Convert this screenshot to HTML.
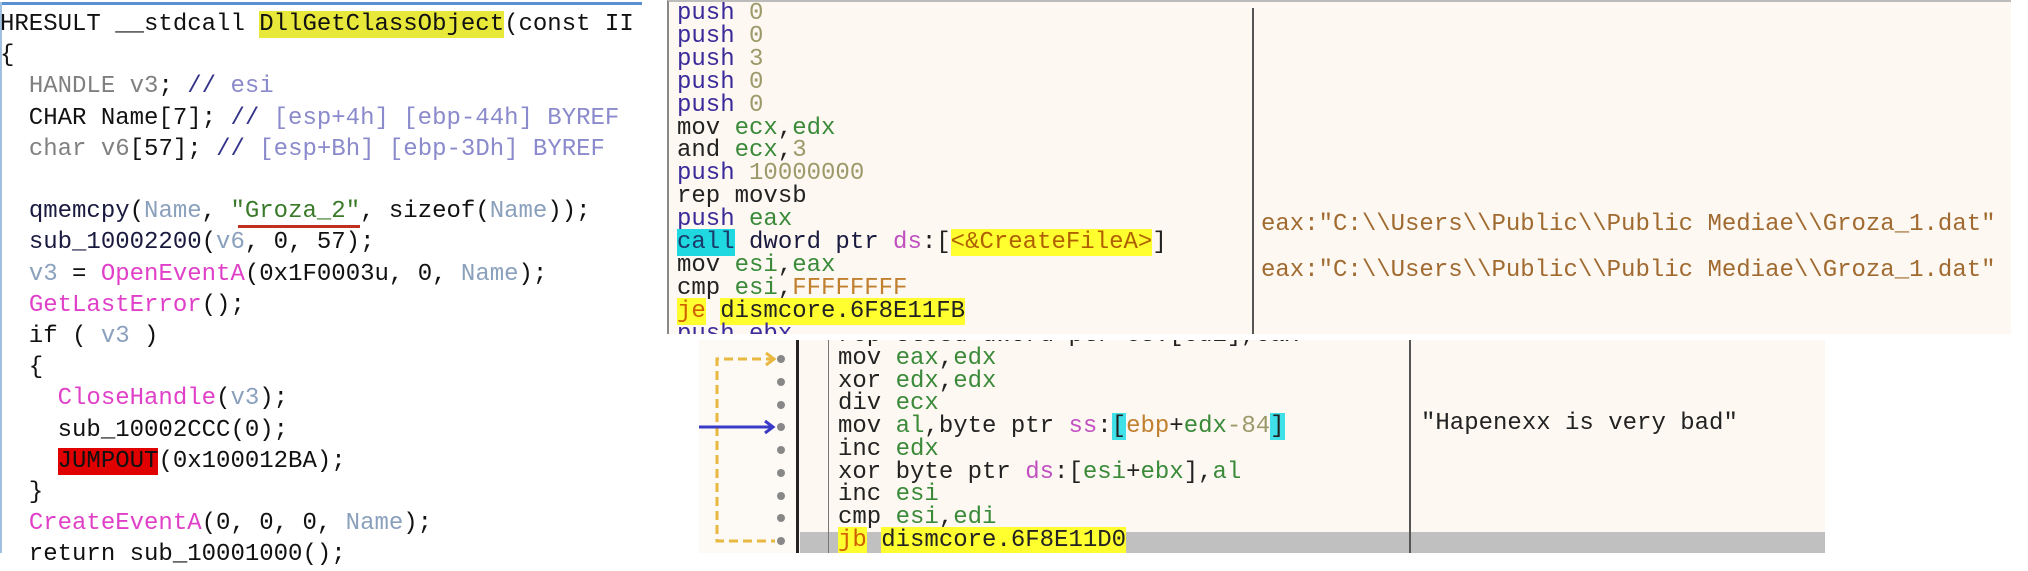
<!DOCTYPE html>
<html><head><meta charset="utf-8"><style>
body{margin:0;width:2028px;height:553px;overflow:hidden;background:#fff;position:relative;font-family:"Liberation Mono",monospace;font-size:24px;}
pre{margin:0;font-family:inherit;font-size:inherit;position:absolute;white-space:pre;}
.g{color:#808080}.c{color:#8a8acc}.cs{color:#33338a}.n{color:#8aa0bc}.f{color:#e040c8}.s{color:#3a7a2a}.k{color:#1a1a40}
.pu{color:#3a2a9a}.nm{color:#9a9a6a}.r{color:#3a8a3a}.o{color:#c08030}.m{color:#c050c0}
</style></head><body>
<div style="position:absolute;left:0;top:2px;width:642px;height:3px;background:#5a8fd0"></div>
<div style="position:absolute;left:0;top:2px;width:2px;height:551px;background:#a0c0e0"></div>
<pre style="left:0;top:9px;line-height:31.2px;color:#111">HRESULT __stdcall <span style="background:#e8e83a">DllGetClassObject</span>(const II
{
  <span class="g">HANDLE v3</span>; <span class="cs">//</span> <span class="c">esi</span>
  CHAR Name[7]; <span class="cs">//</span> <span class="c">[esp+4h] [ebp-44h] BYREF</span>
  <span class="g">char v6</span>[57]; <span class="cs">//</span> <span class="c">[esp+Bh] [ebp-3Dh] BYREF</span>

  <span class="k">qmemcpy</span>(<span class="n">Name</span>, <span class="s">"Groza_2"</span>, sizeof(<span class="n">Name</span>));
  <span class="k">sub_10002200</span>(<span class="n">v6</span>, 0, 57);
  <span class="n">v3</span> = <span class="f">OpenEventA</span>(0x1F0003u, 0, <span class="n">Name</span>);
  <span class="f">GetLastError</span>();
  if ( <span class="n">v3</span> )
  {
    <span class="f">CloseHandle</span>(<span class="n">v3</span>);
    sub_10002CCC(0);
    <span style="background:#e00000">JUMPOUT</span>(0x100012BA);
  }
  <span class="f">CreateEventA</span>(0, 0, 0, <span class="n">Name</span>);
  return sub_10001000();</pre>
<div style="position:absolute;left:238px;top:225px;width:122px;height:3px;background:#c03020"></div>

<div style="position:absolute;left:667px;top:0;width:1342px;height:332px;background:#fdf8f1;border-top:2px solid #bbb;border-left:2px solid #888;overflow:hidden">
<div style="position:absolute;left:583px;top:6px;width:2px;height:330px;background:#555"></div>
<pre style="left:8px;top:1px;line-height:22.9px;color:#222"><span class="pu">push</span> <span class="nm">0</span>
<span class="pu">push</span> <span class="nm">0</span>
<span class="pu">push</span> <span class="nm">3</span>
<span class="pu">push</span> <span class="nm">0</span>
<span class="pu">push</span> <span class="nm">0</span>
mov <span class="r">ecx</span>,<span class="r">edx</span>
and <span class="r">ecx</span>,<span class="nm">3</span>
<span class="pu">push</span> <span class="nm">10000000</span>
rep movsb
<span class="pu">push</span> <span class="r">eax</span>
<span style="background:#20d8e0;color:#1a3a6a">call</span> <span class="k">dword ptr</span> <span class="m">ds</span>:[<span style="background:#ffff30;color:#b06000">&lt;&amp;CreateFileA&gt;</span>]
mov <span class="r">esi</span>,<span class="r">eax</span>
cmp <span class="r">esi</span>,<span class="o">FFFFFFFF</span>
<span style="background:#ffff30;color:#d06000">je</span> <span style="background:#ffff30;color:#222">dismcore.6F8E11FB</span>
<span class="pu">push ebx</span></pre>
<pre style="left:592px;top:200px;line-height:45.8px;color:#a06a30">eax:"C:\\Users\\Public\\Public Mediae\\Groza_1.dat"
eax:"C:\\Users\\Public\\Public Mediae\\Groza_1.dat"</pre>
</div>

<div style="position:absolute;left:699px;top:340px;width:1126px;height:213px;background:#fdf8f1;overflow:hidden">
<div style="position:absolute;left:0;top:0;width:99px;height:213px;background:#fdfaf5"></div>
<div style="position:absolute;left:101px;top:192px;width:1025px;height:30px;background:#c0c0c0"></div>
<div style="position:absolute;left:97px;top:0;width:3px;height:213px;background:#222"></div>
<div style="position:absolute;left:129px;top:0;width:1px;height:213px;background:#777"></div>
<div style="position:absolute;left:710px;top:0;width:2px;height:213px;background:#555"></div>
<svg width="100" height="213" style="position:absolute;left:0;top:0">
<g fill="#888"><circle cx="82" cy="19" r="4"/><circle cx="82" cy="42" r="4"/><circle cx="82" cy="65" r="4"/><circle cx="82" cy="87" r="4"/><circle cx="82" cy="110" r="4"/><circle cx="82" cy="133" r="4"/><circle cx="82" cy="156" r="4"/><circle cx="82" cy="178" r="4"/><circle cx="82" cy="201" r="4"/></g>
<path d="M76 19H18V201H76" fill="none" stroke="#e8b840" stroke-width="3" stroke-dasharray="9 5"/>
<path d="M67 13L75 19L67 25" fill="none" stroke="#e8b840" stroke-width="3"/>
<path d="M-2 87H74M66 81L74 87L66 93" fill="none" stroke="#3a3ac8" stroke-width="3"/>
</svg>
<pre style="left:139px;top:-15px;line-height:22.75px;color:#222">rep stosd dword ptr es:[edi],eax
mov <span class="r">eax</span>,<span class="r">edx</span>
xor <span class="r">edx</span>,<span class="r">edx</span>
div <span class="r">ecx</span>
mov <span class="r">al</span>,byte ptr <span class="m">ss</span>:<span style="background:#40e0e8">[</span><span class="o">ebp</span>+<span class="r">edx</span><span class="nm">-84</span><span style="background:#40e0e8">]</span>
inc <span class="r">edx</span>
xor byte ptr <span class="m">ds</span>:[<span class="r">esi</span>+<span class="r">ebx</span>],<span class="r">al</span>
inc <span class="r">esi</span>
cmp <span class="r">esi</span>,<span class="r">edi</span>
<span style="background:#ffff30;color:#d06000">jb</span> <span style="background:#ffff30">dismcore.6F8E11D0</span></pre>
<pre style="left:722px;top:73px;line-height:22.75px;color:#222">"Hapenexx is very bad"</pre>
</div>
</body></html>
